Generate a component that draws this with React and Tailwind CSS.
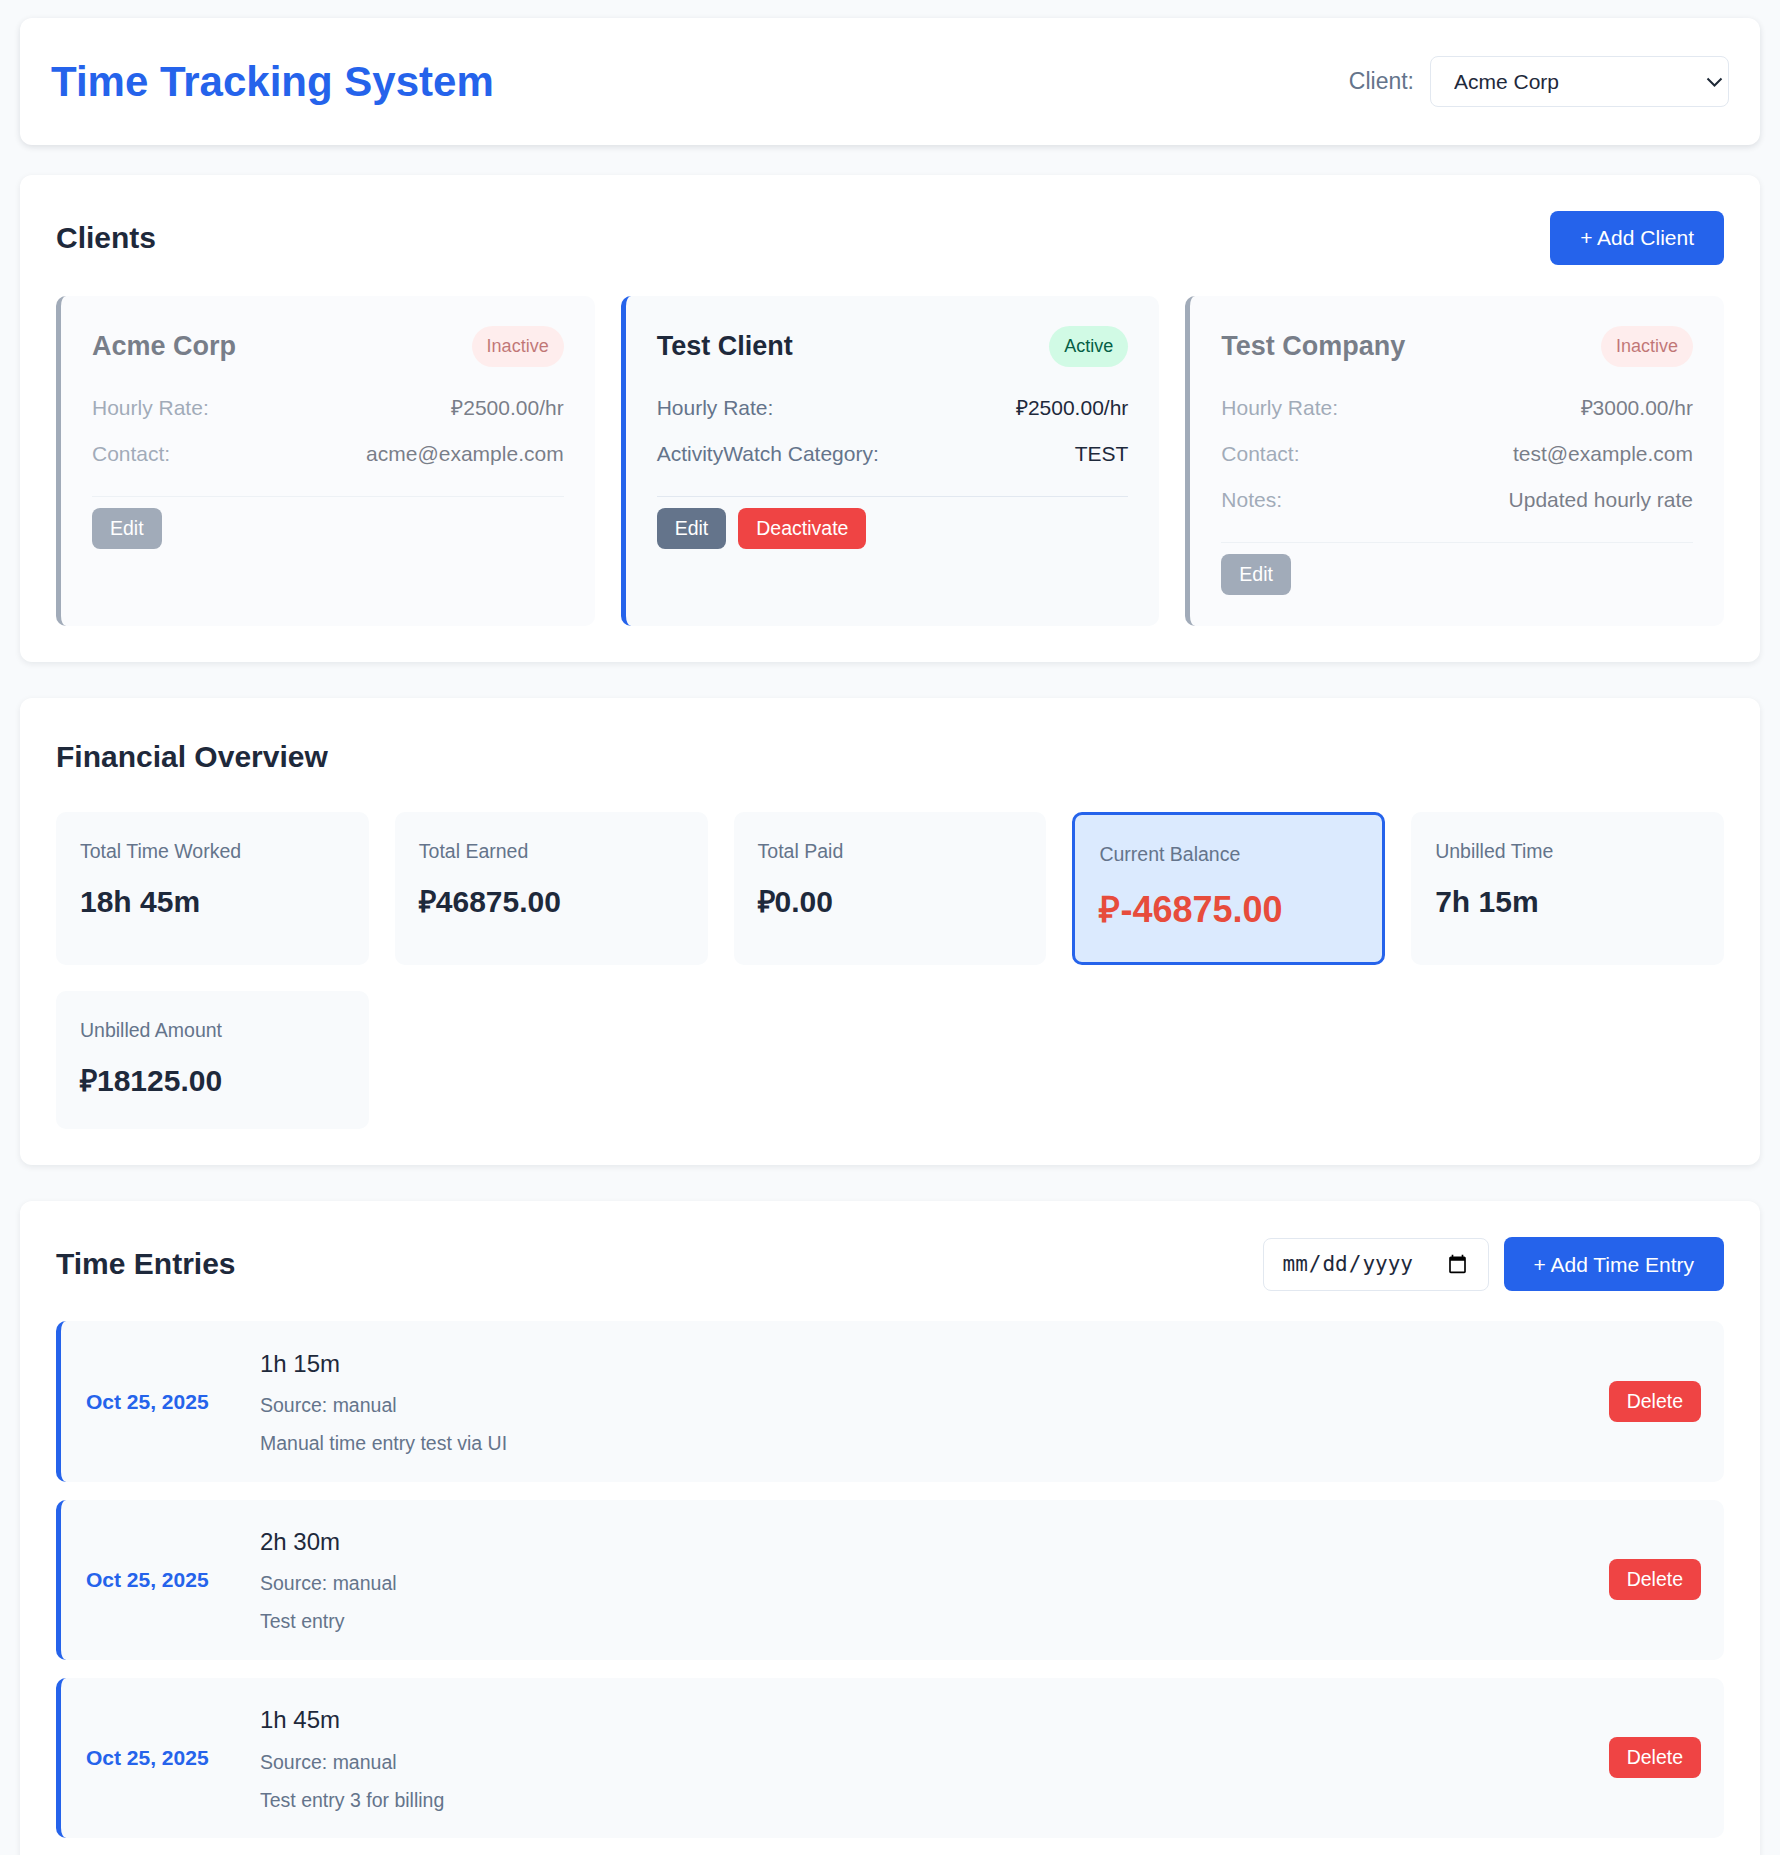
import { useState } from 'react';

const clients = [
  {
    name: 'Acme Corp',
    active: false,
    rows: [
      ['Hourly Rate:', '₽2500.00/hr'],
      ['Contact:', 'acme@example.com'],
    ],
  },
  {
    name: 'Test Client',
    active: true,
    rows: [
      ['Hourly Rate:', '₽2500.00/hr'],
      ['ActivityWatch Category:', 'TEST'],
    ],
  },
  {
    name: 'Test Company',
    active: false,
    rows: [
      ['Hourly Rate:', '₽3000.00/hr'],
      ['Contact:', 'test@example.com'],
      ['Notes:', 'Updated hourly rate'],
    ],
  },
];

const stats = [
  { label: 'Total Time Worked', value: '18h 45m' },
  { label: 'Total Earned', value: '₽46875.00' },
  { label: 'Total Paid', value: '₽0.00' },
  { label: 'Current Balance', value: '₽-46875.00', highlight: true },
  { label: 'Unbilled Time', value: '7h 15m' },
  { label: 'Unbilled Amount', value: '₽18125.00' },
];

const entries = [
  { date: 'Oct 25, 2025', duration: '1h 15m', source: 'manual', note: 'Manual time entry test via UI' },
  { date: 'Oct 25, 2025', duration: '2h 30m', source: 'manual', note: 'Test entry' },
  { date: 'Oct 25, 2025', duration: '1h 45m', source: 'manual', note: 'Test entry 3 for billing' },
];

function ClientCard({ client }) {
  return (
    <div
      className={
        client.active
          ? 'rounded-[10px] border-l-[5px] border-[#2563eb] bg-[#f8fafc] px-[31px] pb-[31px] pt-[30px]'
          : 'rounded-[10px] border-l-[5px] border-[#64748b] bg-[#f8fafc] px-[31px] pb-[31px] pt-[30px] opacity-60'
      }
    >
      <div className="mb-[24px] flex h-[41px] items-center justify-between">
        <h3 className="text-[27px] font-bold leading-[41px] text-[#1e293b]">{client.name}</h3>
        {client.active ? (
          <span className="rounded-full bg-[#d1fae5] px-[15px] py-[10px] text-[18px] leading-[21px] text-[#065f46]">
            Active
          </span>
        ) : (
          <span className="rounded-full bg-[#fee2e2] px-[15px] py-[10px] text-[18px] leading-[21px] text-[#991b1b]">
            Inactive
          </span>
        )}
      </div>
      <div className="flex flex-col gap-[12.5px]">
        {client.rows.map(([label, value]) => (
          <div key={label} className="flex justify-between text-[21px] leading-[33.6px]">
            <span className="text-[#64748b]">{label}</span>
            <span className="text-[#1e293b]">{value}</span>
          </div>
        ))}
      </div>
      <div className="mt-[25px] flex gap-[12px] border-t border-[#e2e8f0] pt-[11px]">
        <button className="h-[41px] rounded-[8px] bg-[#64748b] px-[18px] text-[19.5px] text-white">Edit</button>
        {client.active && (
          <button className="h-[41px] rounded-[8px] bg-[#ef4444] px-[18px] text-[19.5px] text-white">Deactivate</button>
        )}
      </div>
    </div>
  );
}

function StatCard({ stat }) {
  if (stat.highlight) {
    return (
      <div className="rounded-[10px] border-[3px] border-[#2563eb] bg-[#dbeafe] p-[24px]">
        <div className="mb-[12px] text-[19.5px] leading-[30px] text-[#64748b]">{stat.label}</div>
        <div className="text-[36px] font-bold leading-[57.6px] text-[#e74c3c]">{stat.value}</div>
      </div>
    );
  }
  return (
    <div className="rounded-[10px] bg-[#f8fafc] p-[24px]">
      <div className="mb-[12px] text-[19.5px] leading-[30px] text-[#64748b]">{stat.label}</div>
      <div className="text-[30px] font-bold leading-[48px] text-[#1e293b]">{stat.value}</div>
    </div>
  );
}

function EntryRow({ entry }) {
  return (
    <div className="flex items-center rounded-[10px] border-l-[5px] border-[#2563eb] bg-[#f8fafc] py-[23.4px] pl-[25px] pr-[23px]">
      <div className="w-[148px] text-[21px] font-bold text-[#2563eb]">{entry.date}</div>
      <div className="ml-[26px] flex-1">
        <div className="mb-[8px] text-[24px] leading-[37.4px] text-[#1e293b]">{entry.duration}</div>
        <div className="mb-[8px] text-[19.5px] leading-[30px] text-[#64748b]">Source: {entry.source}</div>
        <div className="text-[19.5px] leading-[30px] text-[#64748b]">{entry.note}</div>
      </div>
      <button className="h-[41px] rounded-[8px] bg-[#ef4444] px-[18px] text-[19.5px] text-white">Delete</button>
    </div>
  );
}

export default function App() {
  const [client, setClient] = useState('acme');

  return (
    <div className="min-h-screen bg-[#f8fafc] px-[20px] pb-[20px] pt-[18px] font-['Liberation_Sans',Arial,sans-serif] text-[21px] leading-[1.6] text-[#1e293b]">
      <header className="mb-[30px] flex items-center justify-between rounded-[12px] bg-white px-[31px] py-[31px] shadow-[0_2px_6px_rgba(15,23,42,0.12)]">
        <h1 className="text-[42px] font-bold leading-[65px] text-[#2563eb]">Time Tracking System</h1>
        <div className="flex items-center gap-[16px]">
          <label className="text-[23px] text-[#64748b]">Client:</label>
          <div className="relative">
            <select
              value={client}
              onChange={(e) => setClient(e.target.value)}
              className="h-[51px] w-[299px] appearance-none rounded-[8px] border border-[#e2e8f0] bg-white pl-[23px] text-[21px] text-[#1e293b] outline-none"
            >
              <option value="acme">Acme Corp</option>
              <option value="test">Test Client</option>
              <option value="company">Test Company</option>
            </select>
            <svg
              className="pointer-events-none absolute right-[6px] top-1/2 -translate-y-1/2"
              width="17"
              height="10"
              viewBox="0 0 17 10"
              fill="none"
            >
              <path d="M1.5 1.5L8.5 8.5L15.5 1.5" stroke="#1f2937" strokeWidth="2" />
            </svg>
          </div>
        </div>
      </header>

      <section className="mb-[36px] rounded-[12px] bg-white p-[36px] shadow-[0_2px_6px_rgba(15,23,42,0.08)]">
        <div className="mb-[31px] flex h-[54px] items-center justify-between">
          <h2 className="text-[30px] font-bold text-[#1e293b]">Clients</h2>
          <button className="h-[54px] rounded-[8px] bg-[#2563eb] px-[30px] text-[21px] text-white">+ Add Client</button>
        </div>
        <div className="grid grid-cols-3 gap-[26px]">
          {clients.map((c) => (
            <ClientCard key={c.name} client={c} />
          ))}
        </div>
      </section>

      <section className="mb-[36px] rounded-[12px] bg-white p-[36px] shadow-[0_2px_6px_rgba(15,23,42,0.08)]">
        <h2 className="mb-[32px] text-[30px] font-bold leading-[46px] text-[#1e293b]">Financial Overview</h2>
        <div className="grid grid-cols-5 gap-[26px]">
          {stats.map((s) => (
            <StatCard key={s.label} stat={s} />
          ))}
        </div>
      </section>

      <section className="rounded-[12px] bg-white p-[36px] shadow-[0_2px_6px_rgba(15,23,42,0.08)]">
        <div className="mb-[30px] flex h-[54px] items-center justify-between">
          <h2 className="text-[30px] font-bold text-[#1e293b]">Time Entries</h2>
          <div className="flex items-center gap-[15px]">
            <input
              type="date"
              className="h-[53px] w-[226px] rounded-[8px] border border-[#e2e8f0] bg-white px-[18px] font-['DejaVu_Sans_Mono',monospace] text-[21px] text-[#1e293b]"
            />
            <button className="h-[54px] rounded-[8px] bg-[#2563eb] px-[30px] text-[21px] text-white">+ Add Time Entry</button>
          </div>
        </div>
        <div className="flex flex-col gap-[18px]">
          {entries.map((e, i) => (
            <EntryRow key={i} entry={e} />
          ))}
        </div>
      </section>
    </div>
  );
}
